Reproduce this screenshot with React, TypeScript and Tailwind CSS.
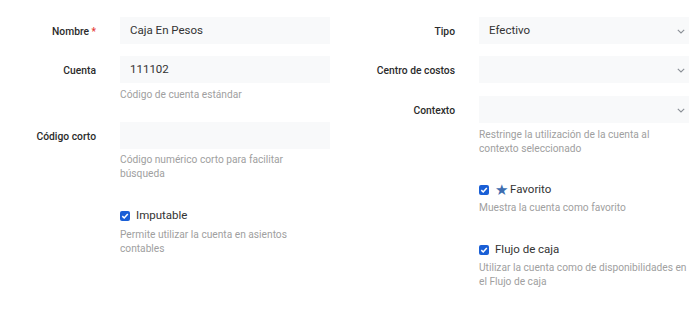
import React from "react";

const font = { fontFamily: "Roboto, 'Noto Sans', Arial, sans-serif" };

function Chevron() {
  return (
    <svg width="8" height="5" viewBox="0 0 8 5" className="shrink-0">
      <path d="M0.8 0.8 L4 3.9 L7.2 0.8" fill="none" stroke="#8a8f96" strokeWidth="1.1" />
    </svg>
  );
}

function Check() {
  return (
    <span className="w-[10px] h-[10px] rounded-[2px] bg-[#1a5fd6] flex items-center justify-center shrink-0">
      <svg width="8" height="8" viewBox="0 0 8 8">
        <path d="M1.3 4.1 L3.2 6 L6.8 1.9" fill="none" stroke="#ffffff" strokeWidth="1.5" />
      </svg>
    </span>
  );
}

function Label({ children }: { children: React.ReactNode }) {
  return (
    <div className="w-[96px] h-[27px] shrink-0 text-right text-[10.3px] font-medium text-[#2b2b2b] leading-[29px]">
      {children}
    </div>
  );
}

function Input({ value, select }: { value?: string; select?: boolean }) {
  return (
    <div className="w-[210px] h-[27px] bg-[#f8f9fa] flex items-center justify-between pl-[10px] pr-[4px] pt-[1px] text-[11.5px] text-[#333]">
      <span>{value}</span>
      {select ? <Chevron /> : null}
    </div>
  );
}

function Help({ children, className }: { children: React.ReactNode; className?: string }) {
  return <div className={"w-[210px] text-[10.2px] leading-[14px] text-[#a0a0a0] " + (className || "")}>{children}</div>;
}

export default function App() {
  return (
    <div className="w-[698px] h-[319px] bg-white flex" style={font}>
      {/* Left column */}
      <div className="w-[359px] shrink-0 pt-[17px] flex flex-col">
        <div className="flex gap-[24px]">
          <Label>
            Nombre <span className="text-[#e53935] text-[10px]">*</span>
          </Label>
          <Input value="Caja En Pesos" />
        </div>
        <div className="flex gap-[24px] mt-[12px]">
          <Label>Cuenta</Label>
          <div className="flex flex-col">
            <Input value="111102" />
            <Help className="mt-[5px]">Código de cuenta estándar</Help>
          </div>
        </div>
        <div className="flex gap-[24px] mt-[20px]">
          <Label>Código corto</Label>
          <div className="flex flex-col">
            <Input />
            <Help className="mt-[4px]">Código numérico corto para facilitar búsqueda</Help>
            <div className="mt-[26px] h-[18px] flex items-center gap-[6px] text-[11.5px] text-[#333]">
              <Check />
              <span>Imputable</span>
            </div>
            <Help className="mt-[3px]">Permite utilizar la cuenta en asientos contables</Help>
          </div>
        </div>
      </div>
      {/* Right column */}
      <div className="flex-1 pt-[17px] flex flex-col">
        <div className="flex gap-[24px]">
          <Label>Tipo</Label>
          <Input value="Efectivo" select />
        </div>
        <div className="flex gap-[24px] mt-[12px]">
          <Label>Centro de costos</Label>
          <Input select />
        </div>
        <div className="flex gap-[24px] mt-[13px]">
          <Label>Contexto</Label>
          <div className="flex flex-col">
            <Input select />
            <Help className="mt-[5px]">Restringe la utilización de la cuenta al contexto seleccionado</Help>
            <div className="mt-[25px] h-[18px] flex items-center gap-[6px] text-[11.5px] text-[#333]">
              <Check />
              <span className="flex items-center gap-[2px]">
                <span className="text-[#3d6db0] text-[15px] leading-none">★</span>
                Favorito
              </span>
            </div>
            <Help className="mt-[2px]">Muestra la cuenta como favorito</Help>
            <div className="mt-[26px] h-[18px] flex items-center gap-[6px] text-[11.5px] text-[#333]">
              <Check />
              <span>Flujo de caja</span>
            </div>
            <Help className="mt-[2px]">Utilizar la cuenta como de disponibilidades en el Flujo de caja</Help>
          </div>
        </div>
      </div>
    </div>
  );
}
